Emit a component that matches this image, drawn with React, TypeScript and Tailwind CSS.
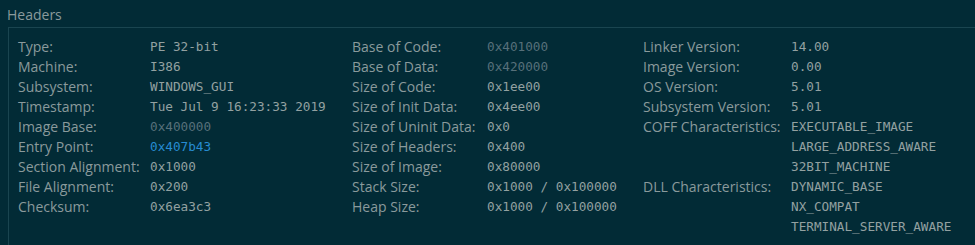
import React from "react";

type Row = { label: string; value: string[]; tone?: "dim" | "link" };

const col1: Row[] = [
  { label: "Type:", value: ["PE 32-bit"] },
  { label: "Machine:", value: ["I386"] },
  { label: "Subsystem:", value: ["WINDOWS_GUI"] },
  { label: "Timestamp:", value: ["Tue Jul 9 16:23:33 2019"] },
  { label: "Image Base:", value: ["0x400000"], tone: "dim" },
  { label: "Entry Point:", value: ["0x407b43"], tone: "link" },
  { label: "Section Alignment:", value: ["0x1000"] },
  { label: "File Alignment:", value: ["0x200"] },
  { label: "Checksum:", value: ["0x6ea3c3"] },
];

const col2: Row[] = [
  { label: "Base of Code:", value: ["0x401000"], tone: "dim" },
  { label: "Base of Data:", value: ["0x420000"], tone: "dim" },
  { label: "Size of Code:", value: ["0x1ee00"] },
  { label: "Size of Init Data:", value: ["0x4ee00"] },
  { label: "Size of Uninit Data:", value: ["0x0"] },
  { label: "Size of Headers:", value: ["0x400"] },
  { label: "Size of Image:", value: ["0x80000"] },
  { label: "Stack Size:", value: ["0x1000 / 0x100000"] },
  { label: "Heap Size:", value: ["0x1000 / 0x100000"] },
];

const col3: Row[] = [
  { label: "Linker Version:", value: ["14.00"] },
  { label: "Image Version:", value: ["0.00"] },
  { label: "OS Version:", value: ["5.01"] },
  { label: "Subsystem Version:", value: ["5.01"] },
  {
    label: "COFF Characteristics:",
    value: ["EXECUTABLE_IMAGE", "LARGE_ADDRESS_AWARE", "32BIT_MACHINE"],
  },
  {
    label: "DLL Characteristics:",
    value: ["DYNAMIC_BASE", "NX_COMPAT", "TERMINAL_SERVER_AWARE"],
  },
];

function Column({ rows, labelW, width }: { rows: Row[]; labelW: string; width: string }) {
  return (
    <div className={`${width} shrink-0`}>
      {rows.map((r) => (
        <div key={r.label} className="flex">
          <div className={`${labelW} shrink-0 h-5 leading-5 text-[14px] text-[#8a9a9c] whitespace-nowrap`}>
            {r.label}
          </div>
          <div className="flex flex-col">
            {r.value.map((v) => (
              <div
                key={v}
                className={`h-5 leading-5 text-[12.7px] whitespace-pre font-['DejaVu_Sans_Mono',monospace] ${
                  r.tone === "dim"
                    ? "text-[#57707a]"
                    : r.tone === "link"
                    ? "text-[#268bd2]"
                    : "text-[#93a1a1]"
                }`}
              >
                {v}
              </div>
            ))}
          </div>
        </div>
      ))}
    </div>
  );
}

export default function App() {
  return (
    <div className="w-[975px] h-[245px] bg-[#022b36] font-['Open_Sans',sans-serif] overflow-hidden">
      <div className="pl-[7px] pt-[4px] h-[27px] text-[14px] leading-[22px] text-[#8a9a9c]">
        Headers
      </div>
      <div className="ml-[8px] h-[218px] border-t border-l border-[#1a4550] pl-[9px] pt-[9px] flex">
        <Column rows={col1} labelW="w-[132px]" width="w-[334px]" />
        <Column rows={col2} labelW="w-[135px]" width="w-[291px]" />
        <Column rows={col3} labelW="w-[148px]" width="w-[320px]" />
      </div>
    </div>
  );
}
